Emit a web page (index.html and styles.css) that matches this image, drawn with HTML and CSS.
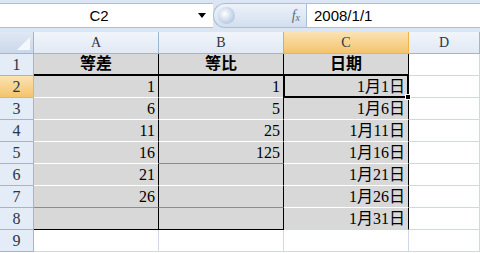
FILE: index.html
```html
<!DOCTYPE html>
<html lang="zh-Hant">
<head>
    <meta charset="UTF-8">
    <title>Book1</title>
    <link rel="stylesheet" href="styles.css">
</head>
<body>
    <div class="toolbar">
        <div class="namebox">
            <span class="ref">C2</span>
            <span class="arrow"></span>
        </div>
        <div class="fx-pill">
            <span class="knob"></span>
            <span class="fx">f<sub>x</sub></span>
        </div>
        <div class="formula">2008/1/1</div>
    </div>

    <div class="sheet">
        <!-- column headers -->
        <div class="hd corner"><span class="tri"></span></div>
        <div class="hd col">A</div>
        <div class="hd col">B</div>
        <div class="hd col active">C</div>
        <div class="hd col">D</div>

        <!-- row 1 -->
        <div class="hd row">1</div>
        <div class="cell fill edge title">等差</div>
        <div class="cell fill edge title">等比</div>
        <div class="cell fill edge title">日期</div>
        <div class="cell"></div>

        <!-- row 2 -->
        <div class="hd row active">2</div>
        <div class="cell fill edge num">1</div>
        <div class="cell fill edge num">1</div>
        <div class="cell fill edge num">1月1日</div>
        <div class="cell"></div>

        <div class="hd row">3</div>
        <div class="cell fill edge num">6</div>
        <div class="cell fill edge num">5</div>
        <div class="cell fill edge num">1月6日</div>
        <div class="cell"></div>

        <div class="hd row">4</div>
        <div class="cell fill edge num">11</div>
        <div class="cell fill edge num">25</div>
        <div class="cell fill edge num">1月11日</div>
        <div class="cell"></div>

        <div class="hd row">5</div>
        <div class="cell fill edge num">16</div>
        <div class="cell fill edge num dim">125</div>
        <div class="cell fill edge num">1月16日</div>
        <div class="cell"></div>

        <div class="hd row">6</div>
        <div class="cell fill edge num">21</div>
        <div class="cell fill edge num"></div>
        <div class="cell fill edge num">1月21日</div>
        <div class="cell"></div>

        <div class="hd row">7</div>
        <div class="cell fill edge num dim">26</div>
        <div class="cell fill edge num dim"></div>
        <div class="cell fill edge num">1月26日</div>
        <div class="cell"></div>

        <div class="hd row">8</div>
        <div class="cell fill edge last"></div>
        <div class="cell fill edge last"></div>
        <div class="cell fill edge num end">1月31日</div>
        <div class="cell"></div>

        <div class="hd row">9</div>
        <div class="cell"></div>
        <div class="cell"></div>
        <div class="cell"></div>
        <div class="cell"></div>

        <div class="selection"><span class="handle"></span></div>
    </div>
</body>
</html>
```

FILE: styles.css
```css
*{
    margin: 0;
    padding: 0;
    box-sizing: border-box;
}
body{
    width: 480px;
    height: 253px;
    overflow: hidden;
    background-color: #fff;
    font-family: "Liberation Serif", "Noto Sans CJK TC", serif;
}

/* formula bar */
.toolbar{
    height: 32px;
    display: flex;
    background-color: #dbe5f3;
    border-top: 3px solid #dbe5f3;
    padding-bottom: 4px;
}
.namebox{
    width: 213px;
    display: flex;
    align-items: center;
    background-color: #fff;
    border-top: 1px solid #a9bfd6;
    border-bottom: 1px solid #a9bfd6;
}
.namebox .ref{
    flex: 1;
    text-align: center;
    font-family: "Liberation Sans", sans-serif;
    font-size: 15px;
    color: #000;
}
.namebox .arrow{
    width: 0;
    height: 0;
    margin-right: 7px;
    border-left: 4px solid transparent;
    border-right: 4px solid transparent;
    border-top: 5px solid #000;
}
.fx-pill{
    width: 93px;
    display: flex;
    align-items: center;
    justify-content: space-between;
    padding: 0 6px 0 4px;
    border: 1px solid #a9bfd6;
    border-right: none;
    border-radius: 12px 0 0 12px;
    background: linear-gradient(#edf2fa, #d2dff0);
}
.knob{
    width: 17px;
    height: 17px;
    border-radius: 50%;
    background: radial-gradient(circle at 40% 40%, #ffffff, #c3d2e6 60%, #9fb4d0);
}
.fx{
    font-family: "Liberation Serif", serif;
    font-style: italic;
    font-size: 14px;
    color: #5b6b80;
}
.fx sub{
    font-size: 10px;
    vertical-align: -1px;
}
.formula{
    flex: 1;
    display: flex;
    align-items: center;
    padding-left: 7px;
    background-color: #fff;
    border: 1px solid #a9bfd6;
    border-right: none;
    font-family: "Liberation Sans", sans-serif;
    font-size: 15px;
    color: #000;
}

/* grid */
.sheet{
    position: relative;
    display: grid;
    grid-template-columns: 34px 125px 125px 125px 1fr;
    grid-auto-rows: 22px;
}
.hd{
    border-right: 1px solid #9eb6ce;
    border-bottom: 1px solid #9eb6ce;
    background: linear-gradient(#f1f5fb, #e1e9f4);
    color: #2a3444;
    text-align: center;
}
.hd.col{
    font-size: 14px;
    line-height: 21px;
}
.hd.row{
    font-size: 16px;
    line-height: 21px;
    background: #e4ecf7;
}
.hd.active{
    background: linear-gradient(#fbe3b4, #f4c46c);
    border-color: #f2b149;
}
.corner{
    position: relative;
    background: linear-gradient(#dfe8f4, #cbd8ea);
}
.tri{
    position: absolute;
    right: 3px;
    bottom: 3px;
    width: 0;
    height: 0;
    border-left: 13px solid transparent;
    border-bottom: 13px solid #f4f7fc;
}

.cell{
    border-right: 1px solid #d0d7e5;
    border-bottom: 1px solid #d0d7e5;
    font-size: 16px;
    line-height: 21px;
    color: #000;
}
.cell.fill{
    background-color: #d8d8d8;
    border-bottom-color: #fff;
}
.cell.edge{
    border-right-color: #000;
}
.cell.title{
    font-weight: bold;
    text-align: center;
    border-bottom: 2px solid #000;
    line-height: 20px;
}
.cell.num{
    text-align: right;
    padding-right: 3px;
}
.cell.dim{
    border-bottom-color: #8c8c8c;
}
.cell.last{
    border-bottom-color: #000;
}
.cell.end{
    border-bottom-color: #d0d7e5;
}

/* active cell C2 */
.selection{
    position: absolute;
    left: 283px;
    top: 42px;
    width: 126px;
    height: 24px;
    border: 2px solid #000;
    pointer-events: none;
}
.handle{
    position: absolute;
    right: -4px;
    bottom: -4px;
    width: 6px;
    height: 6px;
    background-color: #000;
    border: 1px solid #fff;
}
```
